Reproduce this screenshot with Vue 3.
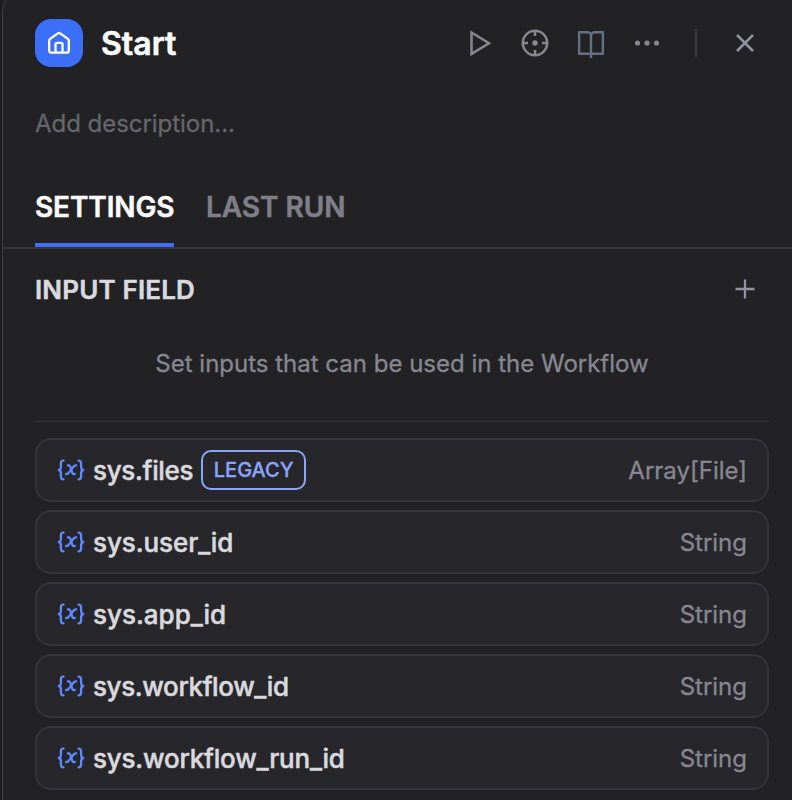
<script setup>
const variables = [
  { name: 'sys.files', type: 'Array[File]', legacy: true, cls: 'n-files' },
  { name: 'sys.user_id', type: 'String', cls: 'n-user' },
  { name: 'sys.app_id', type: 'String', cls: 'n-app' },
  { name: 'sys.workflow_id', type: 'String', cls: 'n-flow' },
  { name: 'sys.workflow_run_id', type: 'String', cls: 'n-run' },
]
</script>

<template>
  <div class="viewport">
    <section class="panel">
      <header class="header">
        <div class="logo">
          <svg width="24" height="24" viewBox="0 0 24 24" fill="none" stroke="#fff" stroke-width="2.3" stroke-linejoin="round">
            <path d="M2.200 9.800c0-.8.3-1.400.9-1.900L10.800 2.400c.8-.6 1.600-.6 2.400 0l7.700 5.500c.6.5.9 1.100.9 1.900V19.500c0 1.400-.9 2.200-2.200 2.200H4.400c-1.300 0-2.200-.8-2.200-2.200Z" />
            <path d="M8.500 21.500V13.500c0-1 .7-1.700 1.700-1.700h3.600c1 0 1.700.7 1.700 1.700v8" />
          </svg>
        </div>
        <h1 class="title">Start</h1>
        <div class="actions">
          <svg width="32" height="32" viewBox="0 0 32 32" fill="none" stroke="#878792" stroke-width="2.500">
            <path d="M8.500 5.500 26 16.200 8.500 26.900Z" />
          </svg>
          <svg width="32" height="32" viewBox="0 0 32 32" fill="none" stroke="#878792" stroke-width="2.500">
            <circle cx="16" cy="16" r="12.200" />
            <path d="M16 4v5M16 23v5M4 16h5M23 16h5" />
            <circle cx="16" cy="16" r="2.700" fill="#878792" stroke="none" />
          </svg>
          <svg width="32" height="32" viewBox="0 0 32 32" fill="none" stroke="#667085" stroke-width="2.400" stroke-linejoin="round">
            <path d="M16 7.500c-.8-1.500-1.700-2.300-3.200-2.300H4.100V26.800H27.900V5.200h-8.700c-1.500 0-2.400.8-3.200 2.300V31" />
          </svg>
          <svg width="32" height="32" viewBox="0 0 32 32" fill="#878792">
            <circle cx="6.500" cy="16" r="2.600" />
            <circle cx="16" cy="16" r="2.600" />
            <circle cx="25.500" cy="16" r="2.600" />
          </svg>
        </div>
        <i class="separator"></i>
        <svg class="close" width="32" height="32" viewBox="0 0 32 32" fill="none" stroke="#9292a0" stroke-width="2.500">
          <path d="M8 8 24 24M24 8 8 24" />
        </svg>
      </header>

      <p class="description"><span>Add description...</span></p>

      <nav class="tabs">
        <div class="tab active"><span>SETTINGS</span></div>
        <div class="tab"><span>LAST RUN</span></div>
      </nav>

      <main class="body">
        <div class="section-head">
          <h2>INPUT FIELD</h2>
          <svg width="24" height="24" viewBox="0 0 24 24" fill="none" stroke="#9292a0" stroke-width="2.300">
            <path d="M12 1.500v19M2.500 11h19" />
          </svg>
        </div>
        <p class="hint"><span>Set inputs that can be used in the Workflow</span></p>
        <div class="rule"></div>
        <div class="list">
          <div v-for="v in variables" :key="v.name" class="row">
            <svg class="var-icon" width="28" height="28" viewBox="0 0 28 28" fill="none" stroke="#6089ff" stroke-width="2.300" stroke-linecap="round" stroke-linejoin="round">
              <path d="M6.500 4.700C4.500 4.700 3.900 5.500 3.900 7.300v3.200c0 2-.6 3.300-2.100 3.500 1.500.2 2.100 1.500 2.100 3.500V20.700c0 1.800.6 2.600 2.600 2.600" />
              <path d="M21.500 4.700c2 0 2.600.8 2.600 2.600v3.200c0 2 .6 3.300 2.100 3.500-1.500.2-2.100 1.500-2.100 3.500V20.700c0 1.800-.6 2.600-2.600 2.600" />
              <path d="M10.800 9.400h.9c.8 0 1.300.4 1.600 1.200l1.900 6.200c.3.8.8 1.200 1.600 1.200h1" />
              <path d="M19.200 9.400h-.4c-.9 0-1.600.4-2.200 1.100l-4.900 6.400c-.6.8-1.200 1.100-2.100 1.100h-.5" />
            </svg>
            <span class="name" :class="v.cls">{{ v.name }}</span>
            <span v-if="v.legacy" class="badge">LEGACY</span>
            <span class="type">{{ v.type }}</span>
          </div>
        </div>
      </main>
    </section>
  </div>
</template>

<style>
body {
  background: #1d1d20;
}
</style>

<style scoped>
.viewport {
  box-sizing: border-box;
  height: 800px;
  padding-left: 2px;
  overflow: hidden;
  font-family: Inter, "Liberation Sans", sans-serif;
  -webkit-text-stroke-width: 0.3px;
}
.panel {
  box-sizing: border-box;
  height: 840px;
  margin-top: -12px;
  margin-right: -31px;
  padding: 11px 30px 0 0;
  border: 1px solid #404044;
  border-radius: 24px 0 0 0;
  background: #222224;
}
h1, h2, p {
  margin: 0;
}
.header {
  display: flex;
  align-items: center;
  height: 86px;
  padding: 0 31px 0 32px;
}
.logo {
  display: flex;
  align-items: center;
  justify-content: center;
  width: 48px;
  height: 48px;
  border-radius: 16px;
  background: #3c6ff8;
}
.title {
  margin-left: 18px;
  padding-top: 2px;
  color: #fbfbfc;
  font-size: 32px;
  font-weight: 600;
  line-height: 40px;
  -webkit-text-stroke-width: 0.6px;
}
.actions {
  display: flex;
  gap: 24px;
  margin-left: auto;
}
.separator {
  width: 2px;
  height: 28px;
  margin: 0 32px;
  background: #3b3b3f;
}
.description {
  height: 76px;
  padding: 22px 0 0 32px;
  box-sizing: border-box;
  color: #66666d;
  font-size: 24px;
  line-height: 32px;
  letter-spacing: -0.04px;
}
.tabs {
  box-sizing: border-box;
  display: flex;
  gap: 32px;
  height: 87px;
  padding-left: 32px;
  border-bottom: 2px solid #37373b;
}
.tab {
  box-sizing: border-box;
  height: 85px;
  padding-top: 28px;
  color: #7f7f89;
  font-size: 28px;
  font-weight: 600;
  line-height: 34px;
  letter-spacing: -0.05px;
  white-space: nowrap;
  -webkit-text-stroke-width: 0.5px;
}
.tab.active {
  width: 139px;
  border-bottom: 4px solid #3c6ff8;
  color: #fbfbfc;
  letter-spacing: -0.12px;
}
.body {
  padding: 0 23px 0 32px;
}
.section-head {
  display: flex;
  align-items: center;
  justify-content: space-between;
  height: 81px;
  padding-right: 12px;
}
.section-head h2 {
  color: #d9d9de;
  font-size: 26px;
  font-weight: 600;
  line-height: 32px;
  letter-spacing: 0.15px;
  -webkit-text-stroke-width: 0.5px;
}
.hint {
  height: 91px;
  padding-top: 18px;
  box-sizing: border-box;
  color: #878792;
  font-size: 24px;
  line-height: 32px;
  text-align: center;
}
.rule {
  height: 1px;
  background: #343438;
}
.list {
  display: grid;
  gap: 8px;
  padding-top: 16px;
}
.row {
  box-sizing: border-box;
  display: flex;
  align-items: center;
  height: 64px;
  padding: 0 20px;
  border: 2px solid #353539;
  border-radius: 16px;
  background: #27272b;
}
.name {
  margin-left: 8px;
  padding-top: 2px;
  color: #d9d9de;
  font-size: 26px;
  font-weight: 500;
  line-height: 32px;
  -webkit-text-stroke-width: 0.5px;
}
.n-files {
  letter-spacing: -0.33px;
}
.n-user {
  letter-spacing: -0.08px;
}
.n-flow {
  letter-spacing: -0.38px;
}
.n-run {
  letter-spacing: -0.2px;
}
.badge {
  box-sizing: border-box;
  width: 105px;
  height: 40px;
  margin-left: 8px;
  border: 2px solid #8aa6fb;
  border-radius: 10px;
  color: #8aa6fb;
  font-size: 20px;
  font-weight: 500;
  line-height: 36px;
  text-align: center;
}
.type {
  margin-left: auto;
  padding-top: 2px;
  color: #878792;
  font-size: 24px;
  line-height: 32px;
}
</style>
